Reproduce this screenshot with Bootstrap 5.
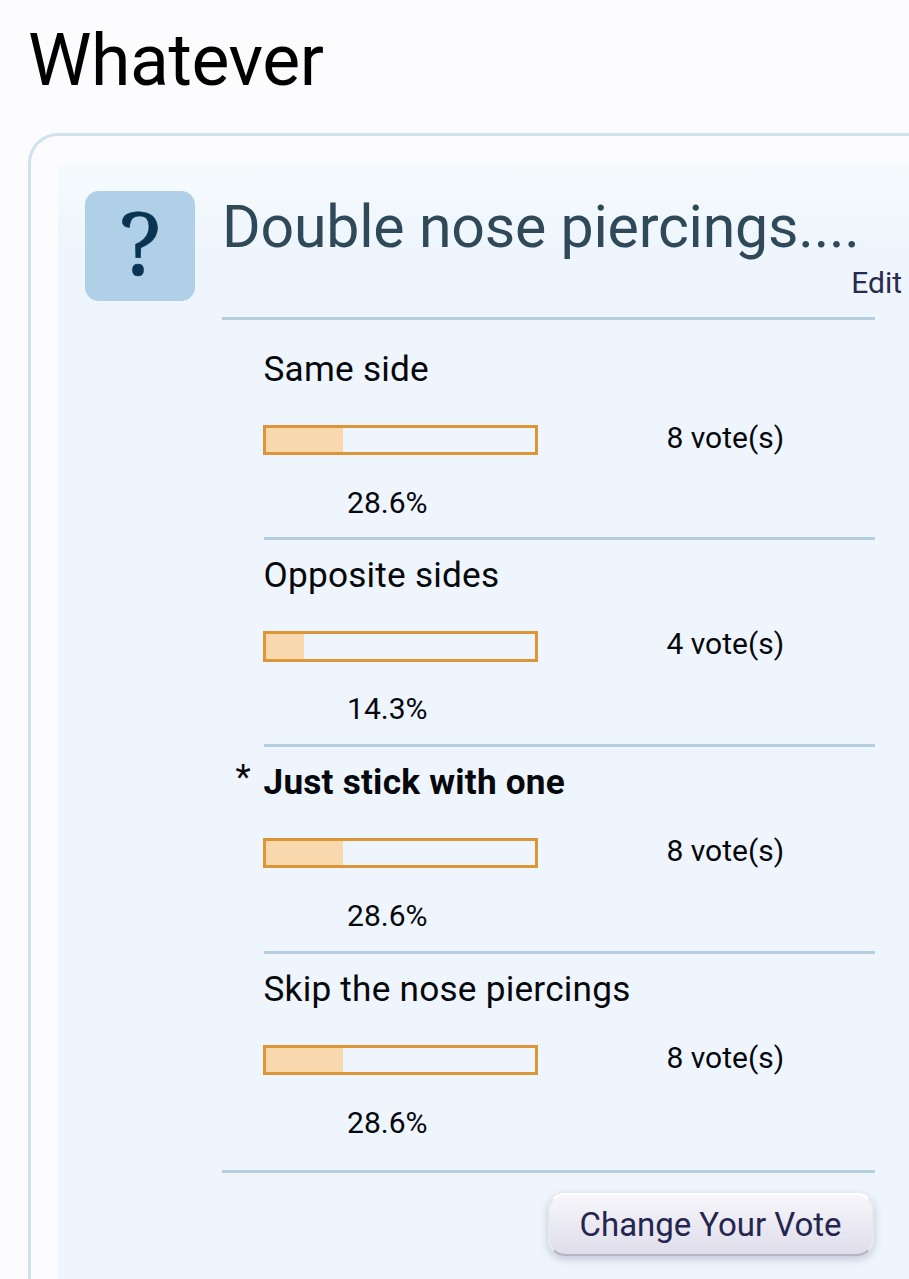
<!DOCTYPE html>
<html lang="en">
<head>
<meta charset="utf-8">
<meta name="viewport" content="width=device-width, initial-scale=1">
<title>Whatever</title>
<link rel="stylesheet" href="https://cdn.jsdelivr.net/npm/bootstrap@5.3.0/dist/css/bootstrap.min.css">
<style>
html, body { height: 1279px; overflow: hidden; }
body { background: #fcfcff; color: #06080c; font-family: Roboto, sans-serif; }
.page-title { font-size: 71.5px; letter-spacing: -.4px; line-height: 84px; padding: 19px 0 0 28px; height: 133px; font-weight: 400; color: #000; }
.frame { height: 1146px; margin-left: 27.5px; border: 3px solid #d0e2ed; border-width: 3px 0 0 3px; border-radius: 30px 0 0 0; padding: 27px 0 0 27px; background: #fcfcff; }
.poll { height: 1116px; padding: 28px 0 0 27.5px; gap: 27px; background: linear-gradient(#f5fafd 0, #f4fafd 20px, #eef5fc 85px); }
.poll-icon { width: 110px; height: 110px; border-radius: 14px; background: #b0d0e7; color: #093553; font: 87px/101px "Noto Serif", "DejaVu Serif", serif; -webkit-text-stroke: .6px #093553; }
.poll-main { width: 653px; }
.poll-head { border-bottom: 3px solid #b5cfe1; height: 129px; padding-top: 1px; }
.poll-title { font-size: 59px; letter-spacing: -.2px; line-height: 70px; color: #2f4959; font-weight: 400; white-space: nowrap; }
.edit-link { font-size: 30px; line-height: 36px; color: #292a50; margin: 3px -27px 0 0; }
.options { padding: 13.5px 0 0 41.5px; }
.option { height: 206.7px; padding-top: 14px; border-bottom: 3px solid #b5cfe1; }
.option:last-child { border-bottom: 0; height: 216.9px; }
.option-name { font-size: 35.2px; letter-spacing: .22px; line-height: 42px; position: relative; white-space: nowrap; }
.own-vote { position: absolute; left: -28px; top: -5px; font-weight: 400; }
.bar-line { margin-top: 35px; height: 30.5px; }
.bar { width: 274.5px; height: 30.5px; border: 3px solid #dc9638; margin-left: -.5px; }
.bar-fill { height: 100%; background: #f9d8ae; }
.votes { margin-left: 129px; font-size: 30px; line-height: 36px; position: relative; top: -2.2px; }
.percent { width: 247.5px; margin-top: 29.8px; font-size: 30px; line-height: 36px; }
.poll-foot { border-top: 3px solid #b5cfe1; padding: 20px 1.5px 0 0; }
.btn-vote { width: 326px; height: 63px; padding: 0; font-size: 33px; line-height: 58px; letter-spacing: -.05px; color: #25264f; border: 2px solid #e9e8f1; border-top-color: #fff; border-bottom-color: #b4b4c6; border-radius: 17px; background: linear-gradient(#f7f6fa, #dfddeb); box-shadow: 0 3px 9px rgba(60,60,90,.25); }
</style>
</head>
<body>
<h1 class="page-title m-0">Whatever</h1>
<main class="frame">
  <section class="poll d-flex align-items-start">
    <div class="poll-icon flex-shrink-0 text-center">?</div>
    <div class="poll-main flex-shrink-0">
      <header class="poll-head">
        <h2 class="poll-title m-0">Double nose piercings....</h2>
        <div class="edit-link text-end">Edit</div>
      </header>
      <div class="options">
        <div class="option">
          <div class="option-name">Same side</div>
          <div class="bar-line d-flex align-items-center"><div class="bar"><div class="bar-fill" style="width:28.6%"></div></div><div class="votes">8 vote(s)</div></div>
          <div class="percent text-center">28.6%</div>
        </div>
        <div class="option">
          <div class="option-name">Opposite sides</div>
          <div class="bar-line d-flex align-items-center"><div class="bar"><div class="bar-fill" style="width:14.3%"></div></div><div class="votes">4 vote(s)</div></div>
          <div class="percent text-center">14.3%</div>
        </div>
        <div class="option">
          <div class="option-name fw-bold"><span class="own-vote">*</span>Just stick with one</div>
          <div class="bar-line d-flex align-items-center"><div class="bar"><div class="bar-fill" style="width:28.6%"></div></div><div class="votes">8 vote(s)</div></div>
          <div class="percent text-center">28.6%</div>
        </div>
        <div class="option">
          <div class="option-name">Skip the nose piercings</div>
          <div class="bar-line d-flex align-items-center"><div class="bar"><div class="bar-fill" style="width:28.6%"></div></div><div class="votes">8 vote(s)</div></div>
          <div class="percent text-center">28.6%</div>
        </div>
      </div>
      <footer class="poll-foot d-flex justify-content-end"><button type="button" class="btn btn-vote">Change Your Vote</button></footer>
    </div>
  </section>
</main>
<script src="https://cdn.jsdelivr.net/npm/bootstrap@5.3.0/dist/js/bootstrap.bundle.min.js"></script>
</body>
</html>
